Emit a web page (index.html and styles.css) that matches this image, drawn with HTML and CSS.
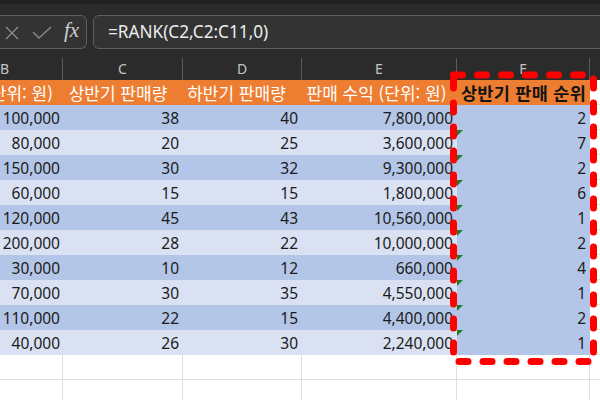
FILE: index.html
```html
<!DOCTYPE html>
<html lang="ko">
<head>
<meta charset="utf-8">
<link rel="stylesheet" href="styles.css">
</head>
<body>
<div class="app">
  <div class="toolbar">
    <div class="namebox">
      <svg class="ico-x" width="14" height="14" viewBox="0 0 14 14"><path d="M1 1 L13 13 M13 1 L1 13" /></svg>
      <svg class="ico-check" width="20" height="13" viewBox="0 0 20 13"><path d="M1 6 L7 12 L19 1" /></svg>
      <span class="fx">fx</span>
    </div>
    <div class="formula">=RANK(C2,C2:C11,0)</div>
  </div>

  <div class="grid colheads">
    <div class="ch first">B</div>
    <div class="ch">C</div>
    <div class="ch">D</div>
    <div class="ch">E</div>
    <div class="ch">F</div>
    <div class="ch last"></div>
  </div>

  <div class="sheet">
    <div class="grid row head">
      <div class="c hb"><span>판매 단가 (단위: 원)</span></div>
      <div class="c hc">상반기 판매량</div>
      <div class="c hd">하반기 판매량</div>
      <div class="c he">판매 수익 (단위: 원)</div>
      <div class="c hf">상반기 판매 순위</div>
      <div class="c g"></div>
    </div>
    <div class="grid row dark"><div class="c">100,000</div><div class="c">38</div><div class="c">40</div><div class="c">7,800,000</div><div class="c f">2</div><div class="c g"></div></div>
    <div class="grid row light"><div class="c">80,000</div><div class="c">20</div><div class="c">25</div><div class="c">3,600,000</div><div class="c f warn">7</div><div class="c g"></div></div>
    <div class="grid row dark"><div class="c">150,000</div><div class="c">30</div><div class="c">32</div><div class="c">9,300,000</div><div class="c f warn">2</div><div class="c g"></div></div>
    <div class="grid row light"><div class="c">60,000</div><div class="c">15</div><div class="c">15</div><div class="c">1,800,000</div><div class="c f warn">6</div><div class="c g"></div></div>
    <div class="grid row dark"><div class="c">120,000</div><div class="c">45</div><div class="c">43</div><div class="c">10,560,000</div><div class="c f warn">1</div><div class="c g"></div></div>
    <div class="grid row light"><div class="c">200,000</div><div class="c">28</div><div class="c">22</div><div class="c">10,000,000</div><div class="c f warn">2</div><div class="c g"></div></div>
    <div class="grid row dark"><div class="c">30,000</div><div class="c">10</div><div class="c">12</div><div class="c">660,000</div><div class="c f warn">4</div><div class="c g"></div></div>
    <div class="grid row light"><div class="c">70,000</div><div class="c">30</div><div class="c">35</div><div class="c">4,550,000</div><div class="c f warn">1</div><div class="c g"></div></div>
    <div class="grid row dark"><div class="c">110,000</div><div class="c">22</div><div class="c">15</div><div class="c">4,400,000</div><div class="c f warn">2</div><div class="c g"></div></div>
    <div class="grid row light"><div class="c">40,000</div><div class="c">26</div><div class="c">30</div><div class="c">2,240,000</div><div class="c f warn">1</div><div class="c g"></div></div>
    <div class="grid row blank"><div class="c"></div><div class="c"></div><div class="c"></div><div class="c"></div><div class="c"></div><div class="c g"></div></div>
    <div class="grid row blank"><div class="c"></div><div class="c"></div><div class="c"></div><div class="c"></div><div class="c"></div><div class="c g"></div></div>

    <svg class="marquee" width="154" height="300" viewBox="0 0 154 300">
      <rect x="7.5" y="7" width="140" height="286.5" />
    </svg>
  </div>
</div>
</body>
</html>
```

FILE: styles.css
```css
html, body {
  margin: 0;
  padding: 0;
}
body {
  width: 600px;
  height: 400px;
  overflow: hidden;
  background: #ffffff;
  font-family: "Noto Sans", "Noto Sans CJK KR", sans-serif;
}
.app {
  width: 600px;
  height: 400px;
  overflow: hidden;
}

/* formula bar */
.toolbar {
  height: 50px;
  box-sizing: border-box;
  background: #2b2b2b;
  border-top: 4px solid #202020;
  padding-top: 11px;
  display: flex;
  gap: 6px;
  margin-right: -10px;
}
.namebox {
  width: 87px;
  height: 34px;
  box-sizing: border-box;
  border: 1px solid #5e5e5e;
  border-left: none;
  border-radius: 0 6px 6px 0;
  background: #333333;
  display: flex;
  align-items: center;
  padding-left: 5px;
}
.ico-x path, .ico-check path {
  fill: none;
  stroke: #8a8a8a;
  stroke-width: 1.4;
}
.ico-x { margin-top: 1px; }
.ico-check { margin-left: 13px; margin-top: 1px; }
.fx {
  margin-left: 12px;
  font-family: "Liberation Serif", "DejaVu Serif", serif;
  font-style: italic;
  font-size: 21px;
  color: #cfcfcf;
  line-height: 1;
  margin-top: -3px;
}
.formula {
  flex: 1;
  height: 34px;
  box-sizing: border-box;
  border: 1px solid #5e5e5e;
  border-radius: 6px;
  background: #333333;
  color: #ececec;
  font-size: 17.2px;
  line-height: 32px;
  padding-left: 14px;
}

/* grid */
.grid {
  display: grid;
  grid-template-columns: 63px 120px 119px 155px 133px 1fr;
}
.colheads {
  height: 30px;
  background: #2b2b2b;
}
.ch {
  margin-top: 8px;
  height: 22px;
  box-sizing: border-box;
  border-right: 1px solid #5a5a5a;
  color: #c4c4c4;
  font-size: 14px;
  line-height: 22px;
  text-align: center;
}
.ch.first {
  text-align: left;
}
.ch.last {
  border-right: none;
}

.sheet {
  position: relative;
}
.row {
  height: 25px;
}
.c {
  height: 25px;
  box-sizing: border-box;
  display: flex;
  align-items: center;
  justify-content: flex-end;
  padding-right: 4px;
  font-size: 15.5px;
  color: #1b1b1b;
  white-space: nowrap;
  overflow: hidden;
  position: relative;
}
.dark .c { background: #b4c6e7; }
.light .c { background: #d9e1f2; }
.row .c.f { background: #b4c6e7; }
.row .c.g { background: #ffffff; border-bottom: 1px solid #e2e2e2; }

.row .c:first-child { padding-right: 3px; }

.warn::before {
  content: "";
  position: absolute;
  top: 0;
  left: 0;
  border-top: 6px solid #1f7d2a;
  border-right: 6px solid transparent;
}

/* header row */
.head .c {
  background: #ed7d31;
  color: #ffffff;
  font-family: "Noto Sans CJK KR", sans-serif;
  font-size: 17px;
  overflow: visible;
}
.head .c.hb {
  overflow: hidden;
  padding-right: 10px;
}
.head .c.hb span { flex: none; }
.head .c.hc { justify-content: center; padding-right: 10px; }
.head .c.hd { justify-content: center; padding-right: 12px; }
.head .c.he { justify-content: center; padding-right: 6px; }
.head .c.hf {
  justify-content: center;
  padding-right: 0;
  color: #141414;
  font-weight: bold;
  font-size: 17.5px;
  letter-spacing: 0.3px;
}
.head .c.g { background: #ffffff; }

/* empty rows */
.blank .c {
  background: #ffffff;
  border-right: 1px solid #dedede;
  border-bottom: 1px solid #dedede;
}
.blank .c.g { border-right: none; }

/* copy marquee overlay */
.marquee {
  position: absolute;
  left: 446px;
  top: -12px;
  overflow: visible;
}
.marquee rect {
  fill: none;
  stroke: #ff0000;
  stroke-width: 7;
  stroke-dasharray: 9 15;
  stroke-linecap: round;
}
```
